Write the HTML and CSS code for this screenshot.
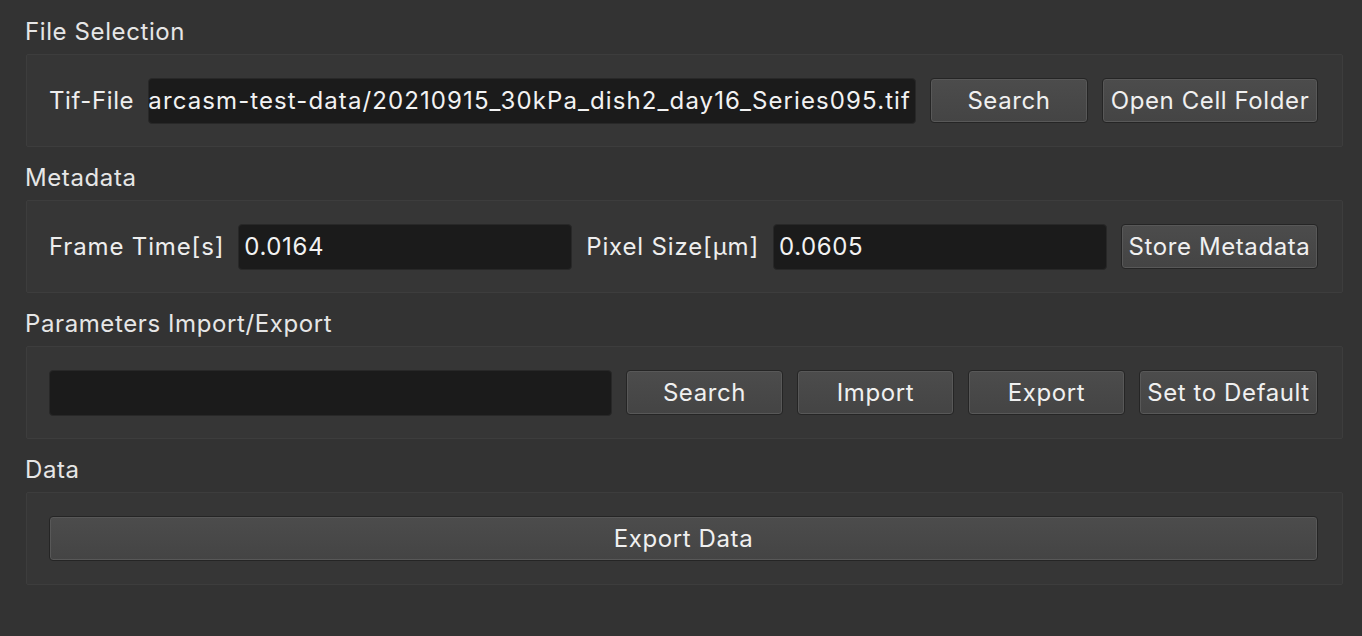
FILE: index.html
```html
<!DOCTYPE html>
<html>
<head>
<meta charset="utf-8">
<link rel="stylesheet" href="styles.css">
</head>
<body>
<div class="page">
  <section class="group">
    <div class="title">File Selection</div>
    <div class="box">
      <span class="label">Tif-File</span>
      <div class="field path"><span>arcasm-test-data/20210915_30kPa_dish2_day16_Series095.tif</span></div>
      <button class="btn w158">Search</button>
      <button class="btn w216">Open Cell Folder</button>
    </div>
  </section>
  <section class="group">
    <div class="title">Metadata</div>
    <div class="box">
      <span class="label wide">Frame Time[s]</span>
      <div class="field"><span>0.0164</span></div>
      <span class="label wide">Pixel Size[μm]</span>
      <div class="field"><span>0.0605</span></div>
      <button class="btn w196">Store Metadata</button>
    </div>
  </section>
  <section class="group">
    <div class="title">Parameters Import/Export</div>
    <div class="box">
      <div class="field"></div>
      <button class="btn w157">Search</button>
      <button class="btn w157">Import</button>
      <button class="btn w157">Export</button>
      <button class="btn w179">Set to Default</button>
    </div>
  </section>
  <section class="group">
    <div class="title">Data</div>
    <div class="box">
      <button class="btn full">Export Data</button>
    </div>
  </section>
</div>
</body>
</html>
```
FILE: styles.css
```css
html, body {
  margin: 0;
  padding: 0;
  background: #333333;
}
body {
  width: 1362px;
  height: 636px;
  overflow: hidden;
  font-family: Inter, "Noto Sans", "Liberation Sans", sans-serif;
  font-size: 24px;
  letter-spacing: 0.6px;
  color: #ececec;
}
.page {
  padding: 1px 19px 0 26px;
}
.title {
  height: 53px;
  padding-top: 9px;
  box-sizing: border-box;
  line-height: 44px;
  margin-left: -1px;
  color: #e6e6e6;
}
.box {
  height: 93px;
  box-sizing: border-box;
  border: 1px solid #3d3d3d;
  border-radius: 2px;
  background: #363636;
  display: flex;
  align-items: center;
  gap: 14px;
  padding: 0 24px 0 22px;
}
.label {
  white-space: nowrap;
  color: #eeeeee;
}
.label.wide {
  letter-spacing: 0.85px;
}
.field {
  flex: 1;
  min-width: 0;
  height: 46px;
  box-sizing: border-box;
  background: #1b1b1b;
  border: 1px solid #282828;
  border-radius: 4px;
  display: flex;
  align-items: center;
  padding: 0 5px;
  overflow: hidden;
  white-space: nowrap;
  color: #f2f2f2;
}
.field.path {
  justify-content: flex-end;
  padding: 0 4px 0 0;
  letter-spacing: 1.1px;
}
.btn {
  height: 45px;
  box-sizing: border-box;
  border: 1px solid #252525;
  border-radius: 4px;
  box-shadow: inset 0 0 0 1px #585858;
  background: linear-gradient(#4c4c4c, #444444);
  color: #f0f0f0;
  font: inherit;
  letter-spacing: inherit;
  padding: 0;
  white-space: nowrap;
  flex-shrink: 0;
}
.w158 { width: 158px; }
.w216 { width: 216px; }
.w196 { width: 197px; }
.w157 { width: 157px; }
.w179 { width: 179px; }
.full { flex: 1; }
```
